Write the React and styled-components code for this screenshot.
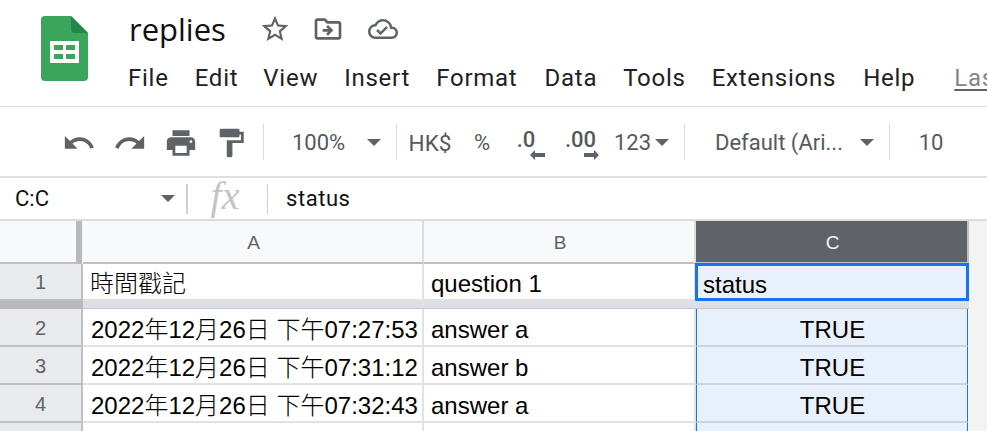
import React from 'react'
import styled, { createGlobalStyle } from 'styled-components'
import {
  MdStarBorder, MdOutlineDriveFileMove, MdOutlineCloudDone,
  MdUndo, MdRedo, MdPrint, MdFormatPaint,
} from 'react-icons/md'

const GlobalStyle = createGlobalStyle`
  html, body { margin: 0; padding: 0; background: #fff; overflow: hidden; }
`

const Page = styled.div`
  width: 987px;
  height: 431px;
  overflow: hidden;
  display: flex;
  flex-direction: column;
  font-family: Roboto, "Liberation Sans", sans-serif;
`

const Header = styled.header`
  height: 107px;
  box-sizing: border-box;
  flex: none;
  display: flex;
  border-bottom: 1px solid #dadce0;
  padding: 13px 0 0 41px;
`

const Logo = styled.svg`
  width: 47px;
  height: 65px;
  flex: none;
  margin-top: 3px;
`

const TitleBlock = styled.div`
  margin-left: 41px;
  display: flex;
  flex-direction: column;
  min-width: 0;
  flex: 1;
`

const TitleRow = styled.div`
  display: flex;
  align-items: center;
  height: 32px;
`

const Title = styled.span`
  font-family: "Open Sans", sans-serif;
  font-size: 31px;
  line-height: 32px;
  color: #111;
  width: 128px;
`

const TitleIcon = styled.span`
  display: flex;
  justify-content: center;
  width: ${p => p.$w}px;
  color: #5f6368;
  font-size: ${p => p.$size || 32}px;
`

const Menu = styled.nav`
  display: flex;
  margin: 17px 0 0 -1px;
  font-size: 24px;
  line-height: 32px;
  letter-spacing: 0.75px;
  color: #202124;
  white-space: nowrap;
`

const MenuItem = styled.span`
  margin-right: ${p => p.$gap}px;
`

const LastEdit = styled.span`
  color: #80868b;
  text-decoration: underline;
  text-decoration-color: #5f6368;
  text-underline-offset: 3px;
`

const Toolbar = styled.div`
  height: 71px;
  box-sizing: border-box;
  flex: none;
  display: flex;
  align-items: center;
  padding: 2px 0 0 53px;
  border-bottom: 2px solid #e0e0e0;
  color: #55595e;
  font-size: 22px;
  white-space: nowrap;
`

const IconButton = styled.span`
  width: ${p => p.$w || 51}px;
  flex: none;
  display: flex;
  justify-content: center;
  font-size: 34px;
  color: #5f6368;
`

const Divider = styled.span`
  width: 1px;
  height: 36px;
  flex: none;
  background: #dadce0;
  margin: -2px 0 0 ${p => p.$left || 0}px;
`

const Arrow = styled.span`
  width: 0;
  height: 0;
  flex: none;
  border-left: 7px solid transparent;
  border-right: 7px solid transparent;
  border-top: 7px solid #5f6368;
`

const Select = styled.span`
  width: ${p => p.$w}px;
  padding-left: ${p => p.$pad}px;
  box-sizing: border-box;
  display: flex;
  align-items: center;
  justify-content: space-between;
  padding-right: ${p => p.$right}px;
  flex: none;
`

const TextButton = styled.span`
  width: ${p => p.$w}px;
  flex: none;
  text-align: center;
  font-size: ${p => p.$size || 22}px;
`

const DecimalButton = styled.span`
  width: ${p => p.$w}px;
  flex: none;
  height: 36px;
  box-sizing: border-box;
  padding-top: 5px;
  display: flex;
  flex-direction: column;
  align-items: center;
  font-size: 22px;
  font-weight: 500;
  line-height: 20px;
  svg {
    margin: 0 0 0 ${p => p.$shift}px;
  }
`

const FormulaBar = styled.div`
  height: 43px;
  box-sizing: border-box;
  flex: none;
  display: flex;
  align-items: center;
  border-bottom: 2px solid #dadce0;
  font-size: 22px;
  color: #111;
`

const NameBox = styled.div`
  width: 186px;
  box-sizing: border-box;
  padding: 0 11px 0 15px;
  display: flex;
  align-items: center;
  justify-content: space-between;
`

const BarDivider = styled.span`
  width: ${p => p.$w}px;
  height: 30px;
  flex: none;
  background: #d0d0d0;
`

const Fx = styled.span`
  width: 79px;
  box-sizing: border-box;
  flex: none;
  text-align: center;
  font-family: "Liberation Serif", serif;
  font-style: italic;
  font-size: 40px;
  line-height: 36px;
  margin-top: -5px;
  padding-right: 5px;
  color: #c4c4c4;
`

const FormulaText = styled.span`
  margin-left: 18px;
  letter-spacing: 0.55px;
`

const Sheet = styled.div`
  flex: 1;
  display: flex;
  flex-direction: column;
  background: #f3f3f3;
  min-height: 0;
`

const Row = styled.div`
  display: grid;
  grid-template-columns: 83px 341px 272px 273px;
  height: ${p => p.$h}px;
  flex: none;
`

const Corner = styled.div`
  background: #f8f9fa;
  box-sizing: border-box;
  border-right: 6px solid #b9b9b9;
  border-bottom: 2px solid #c0c0c0;
  margin-right: 1px;
`

const ColHead = styled.div`
  box-sizing: border-box;
  display: flex;
  align-items: center;
  justify-content: center;
  font-family: "Liberation Sans", sans-serif;
  font-size: 19px;
  padding: 3px 0 0 2px;
  background: ${p => (p.$active ? '#5f6368' : '#f8f9fa')};
  color: ${p => (p.$active ? '#f1f3f4' : '#5f6368')};
  border-bottom: 2px solid #c0c0c0;
  border-right: 2px solid ${p => (p.$active ? '#c0c0c0' : '#dadce0')};
`

const RowHead = styled.div`
  box-sizing: border-box;
  display: flex;
  align-items: center;
  justify-content: center;
  font-family: "Liberation Sans", sans-serif;
  font-size: 20px;
  padding-top: 2px;
  background: #e8eaed;
  color: #5f6368;
  border-right: 2px solid #c0c0c0;
  border-bottom: 2px solid #c0c0c0;
`

const Cell = styled.div`
  box-sizing: border-box;
  display: flex;
  align-items: center;
  padding: 5px 0 0 ${p => p.$pad || 7}px;
  background: #fff;
  border-bottom: 2px solid #e2e2e2;
  border-right: 2px solid #e2e2e2;
  font-family: "Liberation Sans", "Noto Sans CJK TC", sans-serif;
  font-size: 24px;
  font-weight: 300;
  line-height: 28px;
  color: #000;
  white-space: nowrap;
  overflow: hidden;
`

const SelectedCell = styled(Cell)`
  justify-content: center;
  padding-left: 1px;
  background: #e8f0fb;
  border-bottom-color: #ccd3e2;
  border-left: 1px solid #1a73e8;
  border-right: 1px solid #1a73e8;
  margin-right: 1px;
`

const ActiveCell = styled(Cell)`
  position: relative;
  margin: -1px 0 0 -1px;
  padding: 6px 0 0 8px;
  border: none;
  background: #e8f0fb;
  outline: 3px solid #1a73e8;
  outline-offset: -3px;
`

const FreezeHead = styled.div`
  background: #b9b9b9;
`

const FreezeBand = styled.div`
  grid-column: span 3;
  background: #dadfe8;
  border-bottom: 1px solid #c8c8c8;
`

const dataRows = [
  ['2', '2022年12月26日 下午07:27:53', 'answer a', 'TRUE'],
  ['3', '2022年12月26日 下午07:31:12', 'answer b', 'TRUE'],
  ['4', '2022年12月26日 下午07:32:43', 'answer a', 'TRUE'],
  ['', '', '', ''],
]

const menus = [
  ['File', 26], ['Edit', 25], ['View', 26], ['Insert', 26], ['Format', 27],
  ['Data', 26], ['Tools', 26], ['Extensions', 27], ['Help', 39],
]

const DecimalArrow = ({ flip }) => (
  <svg width="15" height="10" viewBox="0 0 15 10" style={flip ? { transform: 'scaleX(-1)' } : undefined}>
    <path d="M5 0 L0 5 L5 10 V7 H15 V3 H5 Z" fill="#5f6368" />
  </svg>
)

export default function App() {
  return (
    <Page>
      <GlobalStyle />
      <Header>
        <Logo viewBox="0 0 47 65">
          <path d="M4 0 H30 L47 17 V61 a4 4 0 0 1 -4 4 H4 a4 4 0 0 1 -4 -4 V4 a4 4 0 0 1 4 -4 Z" fill="#3ba55c" />
          <path d="M30 0 L47 17 H34 a4 4 0 0 1 -4 -4 Z" fill="#23854a" />
          <path d="M9 25 H38 V47 H9 Z M13 29 V34 H22 V29 Z M25 29 V34 H34 V29 Z M13 38 V43 H22 V38 Z M25 38 V43 H34 V38 Z" fill="#fff" fillRule="evenodd" />
        </Logo>
        <TitleBlock>
          <TitleRow>
            <Title>replies</Title>
            <TitleIcon $w={36}><MdStarBorder /></TitleIcon>
            <TitleIcon $w={70}><MdOutlineDriveFileMove /></TitleIcon>
            <TitleIcon $w={40} $size={30}><MdOutlineCloudDone /></TitleIcon>
          </TitleRow>
          <Menu>
            {menus.map(([label, gap]) => (
              <MenuItem key={label} $gap={gap}>{label}</MenuItem>
            ))}
            <LastEdit>Las</LastEdit>
          </Menu>
        </TitleBlock>
      </Header>

      <Toolbar>
        <IconButton><MdUndo /></IconButton>
        <IconButton><MdRedo /></IconButton>
        <IconButton><MdPrint /></IconButton>
        <IconButton $w={50}><MdFormatPaint /></IconButton>
        <Divider $left={7} />
        <Select $w={132} $pad={28} $right={15}>100%<Arrow /></Select>
        <Divider />
        <TextButton $w={66} $size={22.5}>HK$</TextButton>
        <TextButton $w={38}>%</TextButton>
        <DecimalButton $w={50} $shift={23}>.0<DecimalArrow /></DecimalButton>
        <DecimalButton $w={59} $shift={21}>.00<DecimalArrow flip /></DecimalButton>
        <Select $w={74} $pad={4} $right={15}>123<Arrow /></Select>
        <Divider />
        <Select $w={204} $pad={30} $right={15}>Default (Ari...<Arrow /></Select>
        <Divider />
        <TextButton $w={82}>10</TextButton>
      </Toolbar>

      <FormulaBar>
        <NameBox>C:C<Arrow /></NameBox>
        <BarDivider $w={2} />
        <Fx>fx</Fx>
        <BarDivider $w={1} />
        <FormulaText>status</FormulaText>
      </FormulaBar>

      <Sheet>
        <Row $h={43}>
          <Corner />
          <ColHead>A</ColHead>
          <ColHead>B</ColHead>
          <ColHead $active>C</ColHead>
        </Row>
        <Row $h={37}>
          <RowHead>1</RowHead>
          <Cell>時間戳記</Cell>
          <Cell>question 1</Cell>
          <ActiveCell>status</ActiveCell>
        </Row>
        <Row $h={8}>
          <FreezeHead />
          <FreezeBand />
        </Row>
        {dataRows.map(([n, a, b, c], i) => (
          <Row key={i} $h={38}>
            <RowHead>{n}</RowHead>
            <Cell $pad={8}>{a}</Cell>
            <Cell>{b}</Cell>
            <SelectedCell>{c}</SelectedCell>
          </Row>
        ))}
      </Sheet>
    </Page>
  )
}
